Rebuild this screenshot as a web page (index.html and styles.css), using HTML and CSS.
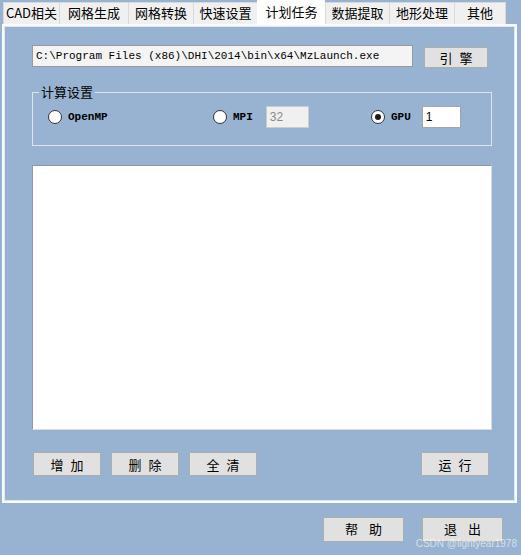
FILE: index.html
```html
<!DOCTYPE html>
<html lang="zh-CN">
<head>
  <meta charset="UTF-8">
  <title>计划任务</title>
  <link rel="stylesheet" href="styles.css">
</head>
<body>

  <!-- tab strip -->
  <div class="tabs">
    <div class="tab t-cad">CAD相关</div>
    <div class="tab t-gen">网格生成</div>
    <div class="tab t-conv">网格转换</div>
    <div class="tab t-quick">快速设置</div>
    <div class="tab t-plan active">计划任务</div>
    <div class="tab t-data">数据提取</div>
    <div class="tab t-terrain">地形处理</div>
    <div class="tab t-other">其他</div>
  </div>

  <div class="panel">
    <div class="path-row">
      <input class="path" type="text" value="C:\Program Files (x86)\DHI\2014\bin\x64\MzLaunch.exe">
      <button class="btn engine">引擎</button>
    </div>

    <fieldset class="group">
      <legend>计算设置</legend>
      <div class="opts">
        <label class="opt opt-omp"><span class="radio"></span><span class="opt-name">OpenMP</span></label>
        <label class="opt opt-mpi"><span class="radio"></span><span class="opt-name">MPI</span><input class="num num-mpi" type="text" value="32" disabled></label>
        <label class="opt opt-gpu"><span class="radio on"></span><span class="opt-name">GPU</span><input class="num num-gpu" type="text" value="1"></label>
      </div>
    </fieldset>

    <div class="log"></div>

    <div class="actions">
      <button class="btn act">增加</button>
      <button class="btn act">删除</button>
      <button class="btn act">全清</button>
      <span class="spacer"></span>
      <button class="btn act run">运行</button>
    </div>
  </div>

  <div class="footer">
    <button class="btn big">帮助</button>
    <button class="btn big">退出</button>
    <span class="mark">CSDN @lightyear1978</span>
  </div>

</body>
</html>
```

FILE: styles.css
```css
/* Base */
* { box-sizing: border-box; margin: 0; padding: 0; }
body {
  width: 521px;
  height: 555px;
  overflow: hidden;
  position: relative;
  background: #98b3d1;
  font-family: "Noto Sans CJK SC", "Liberation Sans", sans-serif;
  font-size: 13px;
  color: #000;
}

/* Tabs */
.tabs {
  display: flex;
  align-items: flex-end;
  height: 24px;
  padding-left: 3px;
}
.tab {
  height: 22px;
  line-height: 20px;
  text-align: center;
  background: #f0f0f0;
  border: 1px solid #d9d9d9;
  border-bottom: none;
  border-right: none;
  white-space: nowrap;
}
.tab.active {
  height: 25px;
  line-height: 21px;
  margin-bottom: -1px;
  background: #fff;
  border-color: #fff;
  position: relative;
  z-index: 1;
}
.t-cad { width: 56px; }
.t-gen { width: 69px; }
.t-conv { width: 65px; }
.t-quick { width: 64px; }
.t-plan { width: 68px; }
.t-data { width: 64px; }
.t-terrain { width: 65px; }
.t-other { width: 52px; border-right: 1px solid #d9d9d9; }

/* Panel */
.panel {
  width: 515px;
  margin-left: 2px;
  border: 2px solid #fafbfc;
  box-shadow: inset 1px 1px 0 #dfe6ee, inset -1px -1px 0 #dfe6ee;
  padding: 19px 0 25px 28px;
}

.path-row {
  display: flex;
  align-items: flex-start;
}
.path {
  width: 381px;
  height: 22px;
  padding: 0 3px;
  border: 1px solid #9a9a9a;
  background: #f4f4f4;
  font-family: "Liberation Mono", monospace;
  font-size: 11px;
  color: #000;
}

/* Buttons */
.btn {
  display: flex;
  align-items: center;
  justify-content: center;
  background: #e1e1e1;
  border: 1px solid #adadad;
  font-family: "Noto Sans CJK SC", sans-serif;
  font-size: 13px;
  line-height: 1;
  color: #000;
  letter-spacing: 7px;
  padding-left: 7px;
}
.engine {
  width: 64px;
  height: 21px;
  margin: 2px 0 0 11px;
}

/* Group box */
.group {
  width: 460px;
  margin-top: 17px;
  border: 1px solid #dce4ec;
  padding: 7px 0 17px;
}
.group legend {
  margin-left: 6px;
  padding: 0 2px;
  line-height: 14px;
}
.opts {
  display: flex;
  align-items: center;
  height: 22px;
  padding-left: 15px;
}
.opt {
  display: flex;
  align-items: center;
}
.opt-omp { width: 165px; }
.opt-mpi { width: 158px; }
.radio {
  width: 14px;
  height: 14px;
  border-radius: 50%;
  border: 1px solid #333;
  background: #fff;
  margin-right: 5px;
  display: flex;
  align-items: center;
  justify-content: center;
}
.radio.on::after {
  content: "";
  width: 6px;
  height: 6px;
  border-radius: 50%;
  background: #1a1a1a;
}
.opt-name {
  font-family: "Liberation Mono", monospace;
  font-weight: bold;
  font-size: 11px;
  margin-left: 1px;
}
.num {
  height: 22px;
  padding: 0 3px;
  border: 1px solid #a5a5a5;
  font-family: "Liberation Sans", sans-serif;
  font-size: 12px;
  background: #fff;
  color: #000;
}
.num-mpi {
  width: 43px;
  margin-left: 13px;
  background: #f0f0f0;
  border-color: #cccccc;
  color: #8a8a8a;
}
.num-gpu {
  width: 39px;
  margin-left: 11px;
}

/* Output box */
.log {
  width: 460px;
  height: 265px;
  margin-top: 19px;
  background: #fff;
  border: 1px solid #dcdcdc;
  border-top-color: #8e98a6;
  border-left-color: #8e98a6;
}

/* Action row */
.actions {
  display: flex;
  width: 460px;
  margin-top: 22px;
  padding: 0 3px 0 1px;
}
.act {
  width: 68px;
  height: 24px;
  margin-right: 10px;
}
.spacer { flex: 1; }
.act.run { margin-right: 0; }

/* Footer */
.footer {
  display: flex;
  justify-content: flex-end;
  gap: 18px;
  padding: 14px 18px 0 0;
}
.big {
  width: 81px;
  height: 25px;
  letter-spacing: 11px;
  padding-left: 11px;
  padding-bottom: 3px;
}
.mark {
  position: absolute;
  right: 4px;
  bottom: 6px;
  font-family: "Liberation Sans", sans-serif;
  font-size: 10px;
  line-height: 10px;
  letter-spacing: 0;
  color: rgba(255, 255, 255, 0.6);
}
```
